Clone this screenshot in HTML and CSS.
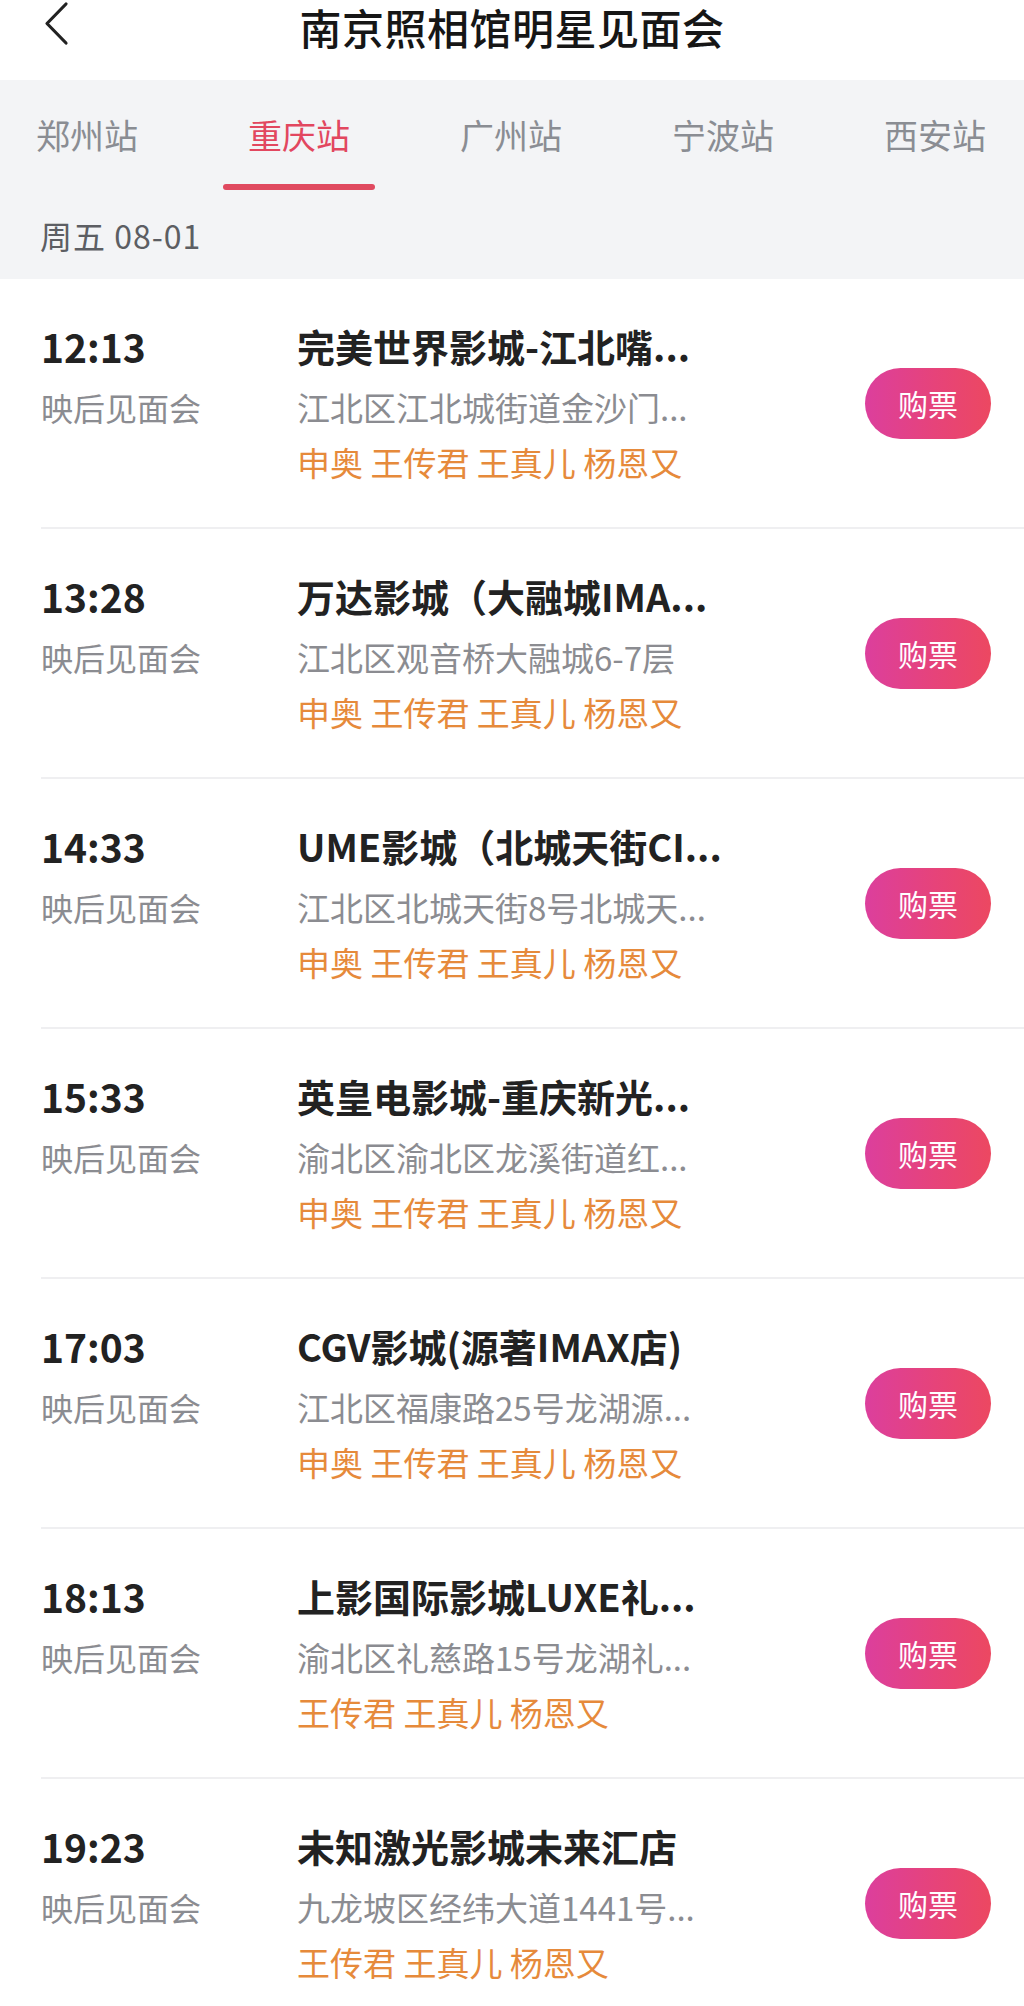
FILE: index.html
```html
<!DOCTYPE html>
<html lang="zh-CN">
<head>
<meta charset="utf-8">
<title>南京照相馆明星见面会</title>
<link rel="stylesheet" href="styles.css">
</head>
<body>
<div class="page">
  <header class="topbar">
    <div class="back">
      <svg width="36" height="46" viewBox="0 0 36 46"><path d="M26 3 L7 22.5 L26 42" fill="none" stroke="#222" stroke-width="3.2" stroke-linecap="round" stroke-linejoin="round"/></svg>
    </div>
    <h1 class="title">南京照相馆明星见面会</h1>
    <div></div>
  </header>

  <section class="filter">
    <nav class="tabs">
      <span class="tab">郑州站</span>
      <span class="tab active">重庆站</span>
      <span class="tab">广州站</span>
      <span class="tab">宁波站</span>
      <span class="tab">西安站</span>
    </nav>
    <div class="date">周五 08-01</div>
  </section>

  <ul class="list">
    <li class="item">
      <div class="left"><div class="time">12:13</div><div class="kind">映后见面会</div></div>
      <div class="mid"><div class="cinema">完美世界影城-江北嘴...</div><div class="addr">江北区江北城街道金沙门...</div><div class="stars">申奥 王传君 王真儿 杨恩又</div></div>
      <button class="buy">购票</button>
    </li>
    <li class="item">
      <div class="left"><div class="time">13:28</div><div class="kind">映后见面会</div></div>
      <div class="mid"><div class="cinema">万达影城（大融城IMA...</div><div class="addr">江北区观音桥大融城6-7层</div><div class="stars">申奥 王传君 王真儿 杨恩又</div></div>
      <button class="buy">购票</button>
    </li>
    <li class="item">
      <div class="left"><div class="time">14:33</div><div class="kind">映后见面会</div></div>
      <div class="mid"><div class="cinema">UME影城（北城天街CI...</div><div class="addr">江北区北城天街8号北城天...</div><div class="stars">申奥 王传君 王真儿 杨恩又</div></div>
      <button class="buy">购票</button>
    </li>
    <li class="item">
      <div class="left"><div class="time">15:33</div><div class="kind">映后见面会</div></div>
      <div class="mid"><div class="cinema">英皇电影城-重庆新光...</div><div class="addr">渝北区渝北区龙溪街道红...</div><div class="stars">申奥 王传君 王真儿 杨恩又</div></div>
      <button class="buy">购票</button>
    </li>
    <li class="item">
      <div class="left"><div class="time">17:03</div><div class="kind">映后见面会</div></div>
      <div class="mid"><div class="cinema">CGV影城(源著IMAX店)</div><div class="addr">江北区福康路25号龙湖源...</div><div class="stars">申奥 王传君 王真儿 杨恩又</div></div>
      <button class="buy">购票</button>
    </li>
    <li class="item">
      <div class="left"><div class="time">18:13</div><div class="kind">映后见面会</div></div>
      <div class="mid"><div class="cinema">上影国际影城LUXE礼...</div><div class="addr">渝北区礼慈路15号龙湖礼...</div><div class="stars">王传君 王真儿 杨恩又</div></div>
      <button class="buy">购票</button>
    </li>
    <li class="item">
      <div class="left"><div class="time">19:23</div><div class="kind">映后见面会</div></div>
      <div class="mid"><div class="cinema">未知激光影城未来汇店</div><div class="addr">九龙坡区经纬大道1441号...</div><div class="stars">王传君 王真儿 杨恩又</div></div>
      <button class="buy">购票</button>
    </li>
  </ul>
</div>
</body>
</html>
```

FILE: styles.css
```css
* { box-sizing: border-box; }
html, body { margin: 0; padding: 0; }
body {
  background: #fff;
  font-family: "Noto Sans CJK SC", "Noto Sans", sans-serif;
  color: #222;
  width: 1024px;
}
.page { width: 1024px; }

.topbar {
  height: 80px;
  padding-top: 1px;
  display: grid;
  grid-template-columns: 1fr auto 1fr;
  align-items: start;
  background: #fff;
}
.back { padding-left: 40px; height: 46px; }
.back svg { display: block; }
.title {
  margin: 0;
  font-size: 42px;
  font-weight: 500;
  line-height: 52px;
  color: #161616;
  letter-spacing: 0.5px;
}

.filter { background: #f3f4f6; }
.tabs {
  display: flex;
  gap: 110px;
  padding: 31px 0 0 36px;
  white-space: nowrap;
}
.tab {
  position: relative;
  flex: none;
  font-size: 34px;
  line-height: 48px;
  padding-bottom: 31px;
  color: #8a8d93;
}
.tab.active { color: #e2475f; }
.tab.active::after {
  content: "";
  position: absolute;
  left: 50%;
  bottom: 0;
  width: 152px;
  height: 6px;
  margin-left: -76px;
  border-radius: 3px;
  background: #e04a60;
}
.date {
  padding: 25px 0 24px 40px;
  font-size: 32px;
  line-height: 40px;
  letter-spacing: 1px;
  color: #5c5e63;
}

.list { list-style: none; margin: 0; padding: 0; }
.item {
  display: flex;
  align-items: center;
  margin-left: 41px;
  padding: 46px 33px 45px 0;
  border-bottom: 2px solid #efeff1;
}
.left { width: 256px; flex: none; align-self: flex-start; }
.time {
  font-size: 39px;
  font-weight: 700;
  line-height: 42px;
  color: #222;
}
.kind {
  margin-top: 20px;
  font-size: 32px;
  line-height: 40px;
  color: #8b8c91;
}
.mid { flex: 1; min-width: 0; }
.cinema {
  font-size: 38px;
  font-weight: 700;
  line-height: 42px;
  color: #222;
  white-space: nowrap;
}
.addr {
  margin-top: 20px;
  font-size: 33px;
  line-height: 40px;
  color: #8b8c91;
  white-space: nowrap;
}
.stars {
  margin-top: 15px;
  font-size: 33px;
  line-height: 40px;
  color: #e68a3b;
  white-space: nowrap;
}
.buy {
  flex: none;
  width: 126px;
  height: 71px;
  border: none;
  border-radius: 36px;
  background: linear-gradient(90deg, #dc3f9d 0%, #e6437a 55%, #ec4861 100%);
  color: #fff;
  font-family: "Noto Sans CJK SC", sans-serif;
  font-size: 30px;
  padding: 0;
  line-height: 71px;
}
```
